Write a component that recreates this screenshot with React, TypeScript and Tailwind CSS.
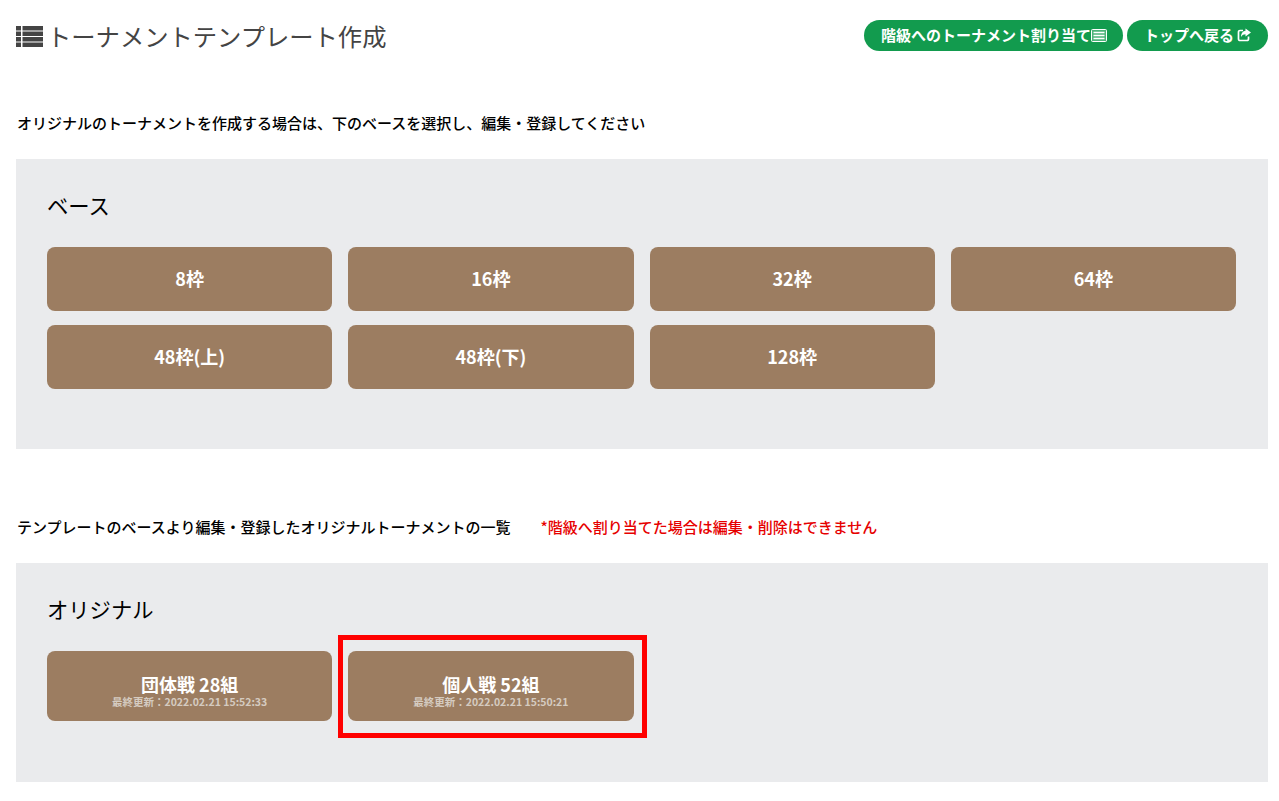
import React from 'react';

const font = { fontFamily: '"Noto Sans CJK JP", "Noto Sans", sans-serif' };

const bases = ['8枠', '16枠', '32枠', '64枠', '48枠(上)', '48枠(下)', '128枠'];

function ListIcon() {
  return (
    <svg viewBox="0 0 27 21" className="w-[27px] h-[21px] fill-[#444444]">
      <rect x="0" y="0" width="5" height="4.500" />
      <rect x="6.500" y="0" width="20.500" height="4.500" />
      <rect x="0" y="5.500" width="5" height="4.500" />
      <rect x="6.500" y="5.500" width="20.500" height="4.500" />
      <rect x="0" y="11" width="5" height="4.500" />
      <rect x="6.500" y="11" width="20.500" height="4.500" />
      <rect x="0" y="16.500" width="5" height="4.500" />
      <rect x="6.500" y="16.500" width="20.500" height="4.500" />
    </svg>
  );
}

function PanelIcon() {
  return (
    <svg viewBox="0 0 16 13" className="w-4 h-[13px]">
      <rect x="0.5" y="0.5" width="15" height="12" rx="1" fill="white" fillOpacity="0.25" stroke="white" />
      <path d="M2.500 3.500h11M2.500 6.500h11M2.500 9.500h11" stroke="white" strokeWidth="1.600" />
    </svg>
  );
}

function ShareIcon() {
  return (
    <svg viewBox="0 0 14 14" className="w-[14px] h-[14px]">
      <path d="M11.500 8.500v2.500a1.500 1.500 0 0 1-1.500 1.500H3A1.500 1.500 0 0 1 1.500 11V4A1.500 1.500 0 0 1 3 2.500h3" fill="none" stroke="white" strokeWidth="1.700" />
      <path d="M8.500 0.500L14 4.500 8.500 8.500V6.200C6.800 6.200 5 6.800 4 9 4 5.500 6 3 8.500 2.800z" fill="white" />
    </svg>
  );
}

function BaseButton({ label }: { label: string }) {
  return (
    <button className="h-[64px] pb-[2px] rounded-lg bg-[#9c7d61] text-white text-[18px] font-bold">
      {label}
    </button>
  );
}

function OriginalButton({ label, updated }: { label: string; updated: string }) {
  return (
    <button className="h-[70px] pt-[9px] rounded-lg bg-[#9c7d61] text-white flex flex-col items-center justify-center">
      <span className="text-[18px] leading-[22px] font-bold">{label}</span>
      <span className="text-[10.5px] leading-[14px] font-bold text-[#d5cbc0]">{updated}</span>
    </button>
  );
}

export default function App() {
  return (
    <div style={font} className="relative min-h-screen bg-white pl-4 pr-[11px] pt-[15px] text-black overflow-hidden">
      <div className="flex items-center justify-between h-[42px]">
        <h1 className="flex items-center gap-[4px] text-[24.3px] font-normal text-[#444444]">
          <ListIcon />
          トーナメントテンプレート作成
        </h1>
        <div className="flex items-center gap-[4px] -mt-[2px]">
          <button className="flex items-center h-[31px] pl-[17px] pr-[16px] rounded-full bg-[#129b4e] text-white text-[15px] font-bold">
            階級へのトーナメント割り当て
            <PanelIcon />
          </button>
          <button className="flex items-center gap-[3px] h-[31px] pl-[17px] pr-[17px] rounded-full bg-[#129b4e] text-white text-[15px] font-bold">
            トップへ戻る
            <ShareIcon />
          </button>
        </div>
      </div>

      <p className="mt-[56px] h-[20px] pl-px leading-[20px] text-[15px] font-medium">
        オリジナルのトーナメントを作成する場合は、下のベースを選択し、編集・登録してください
      </p>

      <section className="mt-[26px] h-[290px] bg-[#eaebed] pl-[31px] pr-[32px] pt-[31px]">
        <h2 className="text-[21.3px] leading-[30px] font-normal">ベース</h2>
        <div className="mt-[27px] grid grid-cols-4 gap-x-4 gap-y-[14px]">
          {bases.map((b) => (
            <BaseButton key={b} label={b} />
          ))}
        </div>
      </section>

      <div className="mt-[68px] h-[20px] pl-px flex gap-[30px] text-[15px] leading-[20px] font-medium">
        <p>テンプレートのベースより編集・登録したオリジナルトーナメントの一覧</p>
        <p className="text-[#e60000]">*階級へ割り当てた場合は編集・削除はできません</p>
      </div>

      <section className="mt-[26px] h-[219px] bg-[#eaebed] pl-[31px] pr-[32px] pt-[31px]">
        <h2 className="text-[21.3px] leading-[30px] font-normal">オリジナル</h2>
        <div className="mt-[27px] grid grid-cols-4 gap-x-4">
          <OriginalButton label="団体戦 28組" updated="最終更新：2022.02.21 15:52:33" />
          <OriginalButton label="個人戦 52組" updated="最終更新：2022.02.21 15:50:21" />
        </div>
      </section>

      {/* annotation drawn over the screenshot */}
      <div className="absolute left-[338px] top-[635px] w-[309px] h-[103px] border-[5px] border-[#ff0000]" />
    </div>
  );
}
